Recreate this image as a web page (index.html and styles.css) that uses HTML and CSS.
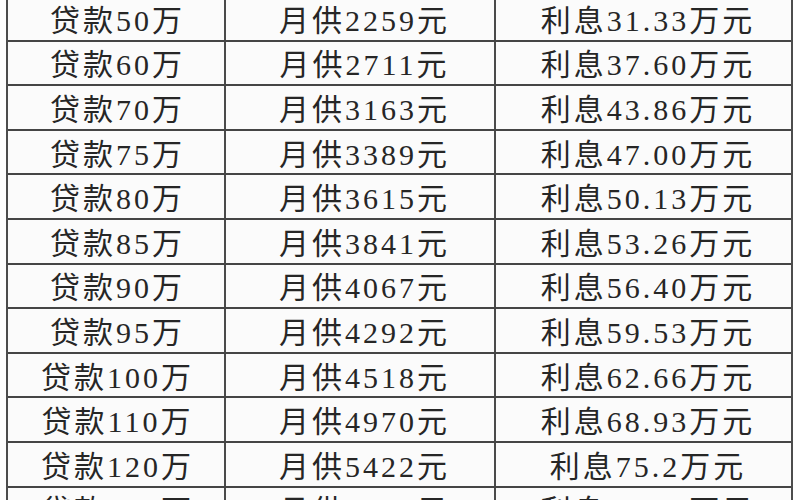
FILE: index.html
```html
<!DOCTYPE html>
<html lang="zh-CN">
<head>
<meta charset="utf-8">
<title>贷款月供利息表</title>
<link rel="stylesheet" href="styles.css">
</head>
<body>
<div class="sheet">
  <div class="row"><div class="cell c1">贷款50万</div><div class="cell c2">月供2259元</div><div class="cell c3">利息31.33万元</div></div>
  <div class="row"><div class="cell c1">贷款60万</div><div class="cell c2">月供2711元</div><div class="cell c3">利息37.60万元</div></div>
  <div class="row"><div class="cell c1">贷款70万</div><div class="cell c2">月供3163元</div><div class="cell c3">利息43.86万元</div></div>
  <div class="row"><div class="cell c1">贷款75万</div><div class="cell c2">月供3389元</div><div class="cell c3">利息47.00万元</div></div>
  <div class="row"><div class="cell c1">贷款80万</div><div class="cell c2">月供3615元</div><div class="cell c3">利息50.13万元</div></div>
  <div class="row"><div class="cell c1">贷款85万</div><div class="cell c2">月供3841元</div><div class="cell c3">利息53.26万元</div></div>
  <div class="row"><div class="cell c1">贷款90万</div><div class="cell c2">月供4067元</div><div class="cell c3">利息56.40万元</div></div>
  <div class="row"><div class="cell c1">贷款95万</div><div class="cell c2">月供4292元</div><div class="cell c3">利息59.53万元</div></div>
  <div class="row"><div class="cell c1">贷款100万</div><div class="cell c2">月供4518元</div><div class="cell c3">利息62.66万元</div></div>
  <div class="row"><div class="cell c1">贷款110万</div><div class="cell c2">月供4970元</div><div class="cell c3">利息68.93万元</div></div>
  <div class="row"><div class="cell c1">贷款120万</div><div class="cell c2">月供5422元</div><div class="cell c3">利息75.2万元</div></div>
  <div class="row"><div class="cell c1">贷款130万</div><div class="cell c2">月供5874元</div><div class="cell c3">利息81.46万元</div></div>
</div>
</body>
</html>
```
FILE: styles.css
```css
html, body {
  margin: 0;
  padding: 0;
  background: #ffffff;
  overflow: hidden;
}
body {
  width: 800px;
  height: 500px;
}
.sheet {
  margin: -3px 0 0 6px;
  width: 787px;
  border-left: 2px solid #4d4d4d;
  border-right: 2px solid #4d4d4d;
  box-sizing: border-box;
  background: #fbfbfb;
}
.row {
  display: grid;
  grid-template-columns: 218px 270px 1fr;
  height: 44.6px;
  box-sizing: border-box;
  border-bottom: 2px solid #454545;
}
.cell {
  display: flex;
  align-items: center;
  justify-content: center;
  padding-top: 5px;
  font-family: "Liberation Serif", "Noto Sans CJK SC", serif;
  font-size: 30px;
  letter-spacing: 3px;
  color: #262626;
  white-space: nowrap;
  line-height: 1;
}
.c1, .c2 {
  border-right: 2px solid #4a4a4a;
}
.c1 { padding-left: 3px; }
.c2 { padding-left: 9px; }
.c3 { padding-left: 9px; }
```
